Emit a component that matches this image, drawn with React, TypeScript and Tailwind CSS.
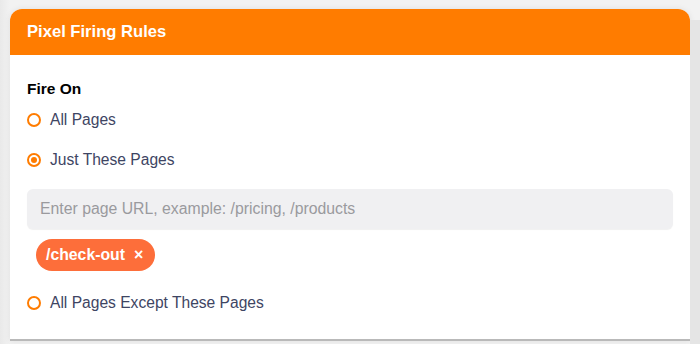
import React from "react";

const font = { fontFamily: '"Liberation Sans", Arial, sans-serif' };

function Radio({ label, checked }: { label: string; checked?: boolean }) {
  return (
    <label className="flex h-[20px] items-center gap-[9px] text-[15.6px] text-[#3e4563]">
      <span className="flex h-[14px] w-[14px] items-center justify-center rounded-full border-[2px] border-[#ff7c00] bg-white">
        {checked && <span className="h-[6px] w-[6px] rounded-full bg-[#ff7c00]" />}
      </span>
      {label}
    </label>
  );
}

export default function App() {
  return (
    <div
      className="flex h-[344px] w-[700px] overflow-hidden bg-[linear-gradient(90deg,#e9e9e9_0px,#f2f2f2_10px)]"
      style={font}
    >
      <div className="ml-[10px] mt-[9px] flex h-[332px] w-[680px] flex-col overflow-hidden rounded-t-[12px] border-b-[2px] border-[#b9b9b9] bg-white shadow-[0_0_6px_rgba(0,0,0,0.08)]">
        <div className="flex h-[46px] shrink-0 items-center bg-[#ff7c00] px-[17px] text-[16.6px] font-bold text-white">
          Pixel Firing Rules
        </div>
        <div className="flex flex-col px-[17px] pt-[25px]">
          <div className="text-[15.5px] font-bold leading-[18px] text-black">Fire On</div>
          <div className="mt-[12px]">
            <Radio label="All Pages" />
          </div>
          <div className="mt-[20px]">
            <Radio label="Just These Pages" checked />
          </div>
          <div className="mt-[19px] flex h-[40px] w-[646px] items-center rounded-[6px] bg-[#f0f0f2] px-[13px] text-[15.8px] text-[#9a9a9e] shadow-[0_1px_1px_rgba(0,0,0,0.06)]">
            Enter page URL, example: /pricing, /products
          </div>
          <div className="mt-[10px] pl-[9px]">
            <span className="inline-flex h-[32px] items-center gap-[9px] rounded-full bg-[#fd6e3a] pl-[10px] pr-[12px] text-[15.8px] font-bold text-white">
              /check-out
              <span className="text-[16px]">×</span>
            </span>
          </div>
          <div className="mt-[22px]">
            <Radio label="All Pages Except These Pages" />
          </div>
        </div>
      </div>
      <div className="ml-auto mt-[20px] w-[10px] bg-[#e5e5e5]" />
    </div>
  );
}
